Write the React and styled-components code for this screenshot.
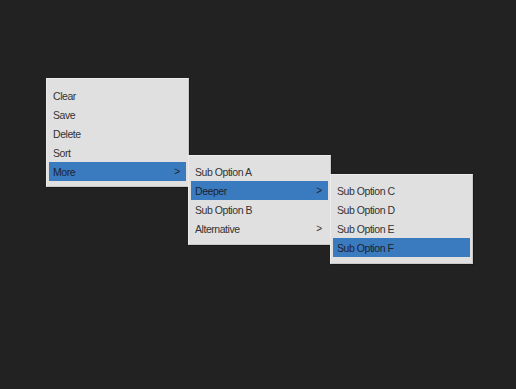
import React from 'react';
import styled, { createGlobalStyle } from 'styled-components';

const GlobalStyle = createGlobalStyle`
  html, body {
    margin: 0;
    padding: 0;
    background: #222222;
  }
  body {
    width: 516px;
    height: 389px;
    overflow: hidden;
    font-family: 'Liberation Sans', Arial, sans-serif;
  }
`;

const Stage = styled.div`
  position: relative;
  width: 516px;
  height: 389px;
  background: #222222;
`;

const MenuPanel = styled.ul`
  position: absolute;
  left: ${p => p.$left}px;
  top: ${p => p.$top}px;
  box-sizing: border-box;
  width: 143px;
  margin: 0;
  padding: ${p => (p.$root ? '7px 2px 5px' : '6px 2px')};
  list-style: none;
  background: #e0e0e0;
  border: 1px solid #c9c9c9;
  border-top-color: #ececec;
  border-left-color: #ececec;
  box-shadow: 1px 1px 0 rgba(0, 0, 0, 0.25);
`;

const MenuItem = styled.li`
  position: relative;
  display: flex;
  justify-content: space-between;
  align-items: center;
  height: 19px;
  padding: 0 6px 0 4px;
  font-size: 10.5px;
  letter-spacing: -0.45px;
  background: ${p => (p.$active ? '#3a7abf' : 'transparent')};
  color: ${p => (p.$active ? '#1c2430' : '#333333')};
  cursor: default;
  white-space: nowrap;
`;

const Arrow = styled.span`
  font-size: 10px;
  letter-spacing: 0;
`;

const SubPanel = styled(MenuPanel)`
  left: calc(100% + 2px);
  top: -7px;
`;

const menu = [
  { label: 'Clear' },
  { label: 'Save' },
  { label: 'Delete' },
  { label: 'Sort' },
  {
    label: 'More',
    active: true,
    children: [
      { label: 'Sub Option A' },
      {
        label: 'Deeper',
        active: true,
        children: [
          { label: 'Sub Option C' },
          { label: 'Sub Option D' },
          { label: 'Sub Option E' },
          { label: 'Sub Option F', active: true },
        ],
      },
      { label: 'Sub Option B' },
      { label: 'Alternative', children: [] },
    ],
  },
];

function Items({ items }) {
  return items.map(item => (
    <MenuItem key={item.label} $active={item.active}>
      <span>{item.label}</span>
      {item.children && <Arrow>&gt;</Arrow>}
      {item.children && item.active && (
        <SubPanel>
          <Items items={item.children} />
        </SubPanel>
      )}
    </MenuItem>
  ));
}

export default function App() {
  return (
    <>
      <GlobalStyle />
      <Stage>
        <MenuPanel $root $left={46} $top={78}>
          <Items items={menu} />
        </MenuPanel>
      </Stage>
    </>
  );
}
